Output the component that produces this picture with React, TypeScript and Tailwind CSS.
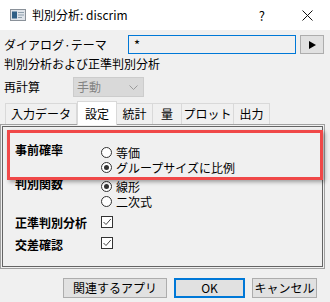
import React from "react";

const font = { fontFamily: '"Noto Sans CJK JP", "Noto Sans", sans-serif' };

function Radio({ checked, label }: { checked?: boolean; label: string }) {
  return (
    <div className="flex items-center h-[15px] shrink-0">
      <span className="w-[11px] h-[11px] rounded-full border border-[#333] bg-white flex items-center justify-center">
        {checked && <span className="w-[5px] h-[5px] rounded-full bg-[#333]" />}
      </span>
      <span className="ml-[4px] text-[12px] leading-[12px] whitespace-nowrap">{label}</span>
    </div>
  );
}

function Check() {
  return (
    <span className="w-[12px] h-[12px] border border-[#333] bg-white flex items-center justify-center">
      <svg width="10" height="10" viewBox="0 0 10 10">
        <path d="M1.5 5 L4 7.5 L8.8 2" fill="none" stroke="#444" strokeWidth="1" />
      </svg>
    </span>
  );
}

export default function App() {
  const tabs = [
    { name: "入力データ", w: "w-[72px]" },
    { name: "設定", w: "w-[40px]", active: true },
    { name: "統計", w: "w-[36px]" },
    { name: "量", w: "w-[29px]" },
    { name: "プロット", w: "w-[52px]" },
    { name: "出力", w: "w-[36px]" },
  ];

  return (
    <div className="w-[330px] h-[302px] bg-[#f0f0f0] relative overflow-hidden text-black" style={font}>
      {/* title bar */}
      <div className="h-[30px] bg-white flex items-center">
        <svg className="ml-[10px]" width="16" height="12" viewBox="0 0 16 12">
          <rect x="0.5" y="0.5" width="15" height="11" fill="#dfe4ea" stroke="#8a9199" />
          <rect x="2" y="2.5" width="5" height="7" fill="#2f5f86" />
          <rect x="8" y="3" width="6" height="1" fill="#8fa0ad" />
          <rect x="8" y="5.5" width="6" height="1" fill="#8fa0ad" />
          <rect x="8" y="8" width="4" height="1" fill="#8fa0ad" />
        </svg>
        <span className="ml-[6px] text-[12px] leading-none">判別分析: discrim</span>
        <span className="ml-auto text-[13px] leading-none mr-[37px]">?</span>
        <svg className="mr-[17px]" width="11" height="11" viewBox="0 0 11 11">
          <path d="M0.5 0.5 L10.5 10.5 M10.5 0.5 L0.5 10.5" stroke="#111" strokeWidth="1" />
        </svg>
      </div>

      {/* theme row */}
      <div className="mt-[5px] h-[19px] flex items-center">
        <span className="pl-[4px] w-[128px] text-[12px] leading-none">ダイアログ·テーマ</span>
        <div className="w-[168px] h-[19px] border border-[#0078d7] bg-[#f0f0f0] flex items-center">
          <span className="ml-[5px] text-[13px] leading-none">*</span>
        </div>
        <div className="ml-[4px] w-[24px] h-[19px] border border-[#adadad] bg-[#e1e1e1] flex items-center justify-center">
          <svg width="7" height="8" viewBox="0 0 7 8">
            <path d="M0 0 L7 4 L0 8 Z" fill="#000" />
          </svg>
        </div>
      </div>

      <div className="h-[19px] flex items-center pl-[4px] text-[12px] leading-none">判別分析および正準判別分析</div>

      {/* recalc row */}
      <div className="mt-[4px] h-[20px] flex items-center">
        <span className="pl-[4px] w-[73px] text-[12px] leading-none">再計算</span>
        <div className="w-[71px] h-[20px] border border-[#cccccc] bg-[#d9d9d9] flex items-center">
          <span className="ml-[3px] text-[12px] leading-none text-[#838383]">手動</span>
          <svg className="ml-auto mr-[5px]" width="9" height="5" viewBox="0 0 9 5">
            <path d="M0.5 0.5 L4.5 4.5 L8.5 0.5" fill="none" stroke="#9a9a9a" />
          </svg>
        </div>
      </div>

      {/* tabs */}
      <div className="mt-[4px] h-[23px] flex items-end pl-[5px] relative z-10">
        {tabs.map((t) =>
          t.active ? (
            <div
              key={t.name}
              className={`${t.w} h-[24px] -mb-[1px] bg-white border border-b-0 border-[#d9d9d9] flex items-center justify-center text-[12px] leading-none whitespace-nowrap`}
            >
              {t.name}
            </div>
          ) : (
            <div
              key={t.name}
              className={`${t.w} h-[21px] bg-[#f0f0f0] border-t border-r border-[#d9d9d9] first:border-l flex items-center justify-center text-[12px] leading-none whitespace-nowrap`}
            >
              {t.name}
            </div>
          )
        )}
      </div>

      {/* panel */}
      <div className="w-[325px] h-[145px] border border-[#a0a0a0] p-[1px]">
        <div className="h-full border border-[#646464] pt-[18px] pl-[12px]">
          <div className="grid grid-cols-[86px_1fr] items-start">
            <span className="text-[12px] font-bold leading-[12px] -mt-[1px]">事前確率</span>
            <div className="flex flex-col">
              <Radio label="等価" />
              <Radio checked label="グループサイズに比例" />
            </div>

            <span className="text-[12px] font-bold leading-[12px] mt-[3px]">判別関数</span>
            <div className="flex flex-col mt-[4px]">
              <Radio checked label="線形" />
              <Radio label="二次式" />
            </div>

            <span className="text-[12px] font-bold leading-[12px] mt-[8px]">正準判別分析</span>
            <div className="mt-[7px]">
              <Check />
            </div>

            <span className="text-[12px] font-bold leading-[12px] mt-[10px]">交差確認</span>
            <div className="mt-[8px]">
              <Check />
            </div>
          </div>
        </div>
      </div>

      {/* buttons */}
      <div className="mt-[9px] flex items-center">
        <button className="ml-[63px] w-[104px] h-[20px] border border-[#adadad] bg-[#e1e1e1] text-[12px] leading-none">
          関連するアプリ
        </button>
        <button className="ml-[7px] w-[71px] h-[20px] border-2 border-[#0078d7] bg-[#e1e1e1] text-[12px] leading-none">
          OK
        </button>
        <button className="ml-[7px] w-[65px] h-[20px] border border-[#adadad] bg-[#e1e1e1] text-[12px] leading-none">
          キャンセル
        </button>
      </div>

      {/* red annotation */}
      <div className="absolute left-[7px] top-[130px] w-[316px] h-[50px] border-[3px] border-[#f04848] shadow-[2px_2px_4px_rgba(0,0,0,0.35)]" />
    </div>
  );
}
